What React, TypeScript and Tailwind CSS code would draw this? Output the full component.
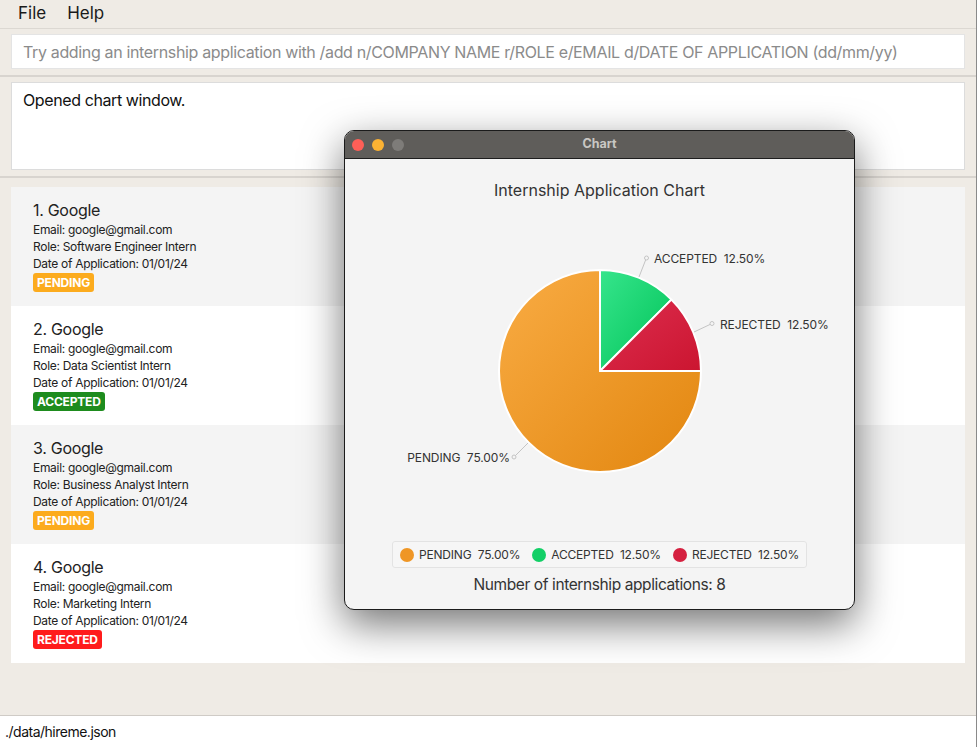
import React from "react";

const font = { fontFamily: "Inter, 'Noto Sans', sans-serif" };

type Status = "PENDING" | "ACCEPTED" | "REJECTED";
const apps: { n: number; role: string; status: Status }[] = [
  { n: 1, role: "Software Engineer Intern", status: "PENDING" },
  { n: 2, role: "Data Scientist Intern", status: "ACCEPTED" },
  { n: 3, role: "Business Analyst Intern", status: "PENDING" },
  { n: 4, role: "Marketing Intern", status: "REJECTED" },
];

function Badge({ s }: { s: Status }) {
  const cls =
    s === "PENDING"
      ? "bg-[#fcab1d]"
      : s === "ACCEPTED"
      ? "bg-[#1e8c1e]"
      : "bg-[#ff1c1c]";
  return (
    <span
      className={`${cls} flex items-center h-[19px] px-[4px] rounded-[3px] text-white text-[12px] font-bold leading-none tracking-[-0.2px]`}
    >
      {s}
    </span>
  );
}

function Card({ a, i }: { a: (typeof apps)[number]; i: number }) {
  return (
    <div
      className={`${i % 2 === 0 ? "bg-[#f4f4f4]" : "bg-white"} h-[119px] pl-[22px] pt-[13px] flex flex-col items-start text-[#222]`}
    >
      <div className="text-[16px] leading-[20px] tracking-[-0.3px]">{a.n}. Google</div>
      <div className="text-[12px] leading-[17px] tracking-[-0.3px] mt-[1px]">Email: google@gmail.com</div>
      <div className="text-[12px] leading-[17px] tracking-[-0.3px]">Role: {a.role}</div>
      <div className="text-[12px] leading-[17px] tracking-[-0.3px]">Date of Application: 01/01/24</div>
      <div className="mt-[1px] flex">
        <Badge s={a.status} />
      </div>
    </div>
  );
}

function Pie() {
  return (
    <svg width="508" height="330" viewBox="0 0 508 330" className="block">
      <defs>
        <linearGradient id="gp" x1="0" y1="0" x2="1" y2="1">
          <stop offset="0" stopColor="#f9ac44" />
          <stop offset="1" stopColor="#e2860f" />
        </linearGradient>
        <linearGradient id="ga" x1="0" y1="0" x2="1" y2="1">
          <stop offset="0" stopColor="#36e58c" />
          <stop offset="1" stopColor="#00c257" />
        </linearGradient>
        <linearGradient id="gr" x1="0" y1="0" x2="1" y2="1">
          <stop offset="0" stopColor="#dd2e4f" />
          <stop offset="1" stopColor="#cb1530" />
        </linearGradient>
      </defs>
      <g stroke="#ffffff" strokeWidth="2" strokeLinejoin="round">
        <path d="M254,170 L254,69 A101,101 0 1 0 355,170 Z" fill="url(#gp)" />
        <path d="M254,170 L254,69 A101,101 0 0 1 325.4,98.6 Z" fill="url(#ga)" />
        <path d="M254,170 L325.4,98.6 A101,101 0 0 1 355,170 Z" fill="url(#gr)" />
      </g>
      <g stroke="#c4c4c4" strokeWidth="1" fill="#f4f4f4">
        <line x1="293" y1="76" x2="300" y2="58" />
        <circle cx="300.5" cy="57" r="2" />
        <line x1="348" y1="131" x2="365" y2="123" />
        <circle cx="366" cy="122.5" r="2" />
        <line x1="182" y1="242" x2="169" y2="255" />
        <circle cx="168" cy="256" r="2" />
      </g>
      <g fill="#333" fontSize="12" letterSpacing="-0.1" style={font}>
        <text x="308" y="61.5">ACCEPTED&#160;&#160;12.50%</text>
        <text x="374" y="127.5">REJECTED&#160;&#160;12.50%</text>
        <text x="164" y="260.5" textAnchor="end">PENDING&#160;&#160;75.00%</text>
      </g>
    </svg>
  );
}

function LegendItem({ color, label }: { color: string; label: string }) {
  return (
    <div className="flex items-center gap-[5px]">
      <span className={`${color} w-[14px] h-[14px] rounded-full`} />
      <span className="text-[12px] tracking-[-0.2px] text-[#333] whitespace-pre">{label}</span>
    </div>
  );
}

function ChartWindow() {
  return (
    <div className="absolute left-[344px] top-[130px] w-[511px] h-[480px] rounded-[10px] border border-[#1b1b1b] bg-[#f4f4f4] shadow-[0_14px_40px_rgba(0,0,0,0.55)] overflow-hidden flex flex-col">
      <div className="h-[28px] bg-[#5f5d5a] border-b border-[#1e1e1e] relative flex items-center shrink-0">
        <div className="flex gap-[8px] pl-[7px]">
          <span className="w-[12px] h-[12px] rounded-full bg-[#fe5f57]" />
          <span className="w-[12px] h-[12px] rounded-full bg-[#fbb233]" />
          <span className="w-[12px] h-[12px] rounded-full bg-[#7e7c79]" />
        </div>
        <div className="absolute inset-0 flex items-center justify-center text-[12.5px] font-bold text-[#c9c7c4]">
          Chart
        </div>
      </div>
      <div className="flex flex-col items-center pt-[20px]">
        <div className="text-[16px] leading-[22px] text-[#333]">Internship Application Chart</div>
        <Pie />
        <div className="mt-[10px] h-[27px] px-[7px] flex items-center gap-[12px] rounded-[3px] border border-[#e3e3e3] bg-[#f6f6f6]">
          <LegendItem color="bg-[#ef9625]" label="PENDING  75.00%" />
          <LegendItem color="bg-[#12cf66]" label="ACCEPTED  12.50%" />
          <LegendItem color="bg-[#d5203f]" label="REJECTED  12.50%" />
        </div>
        <div className="mt-[7px] text-[15.5px] leading-[20px] tracking-[-0.4px] text-[#333]">
          Number of internship applications: 8
        </div>
      </div>
    </div>
  );
}

export default function App() {
  return (
    <div style={font} className="relative w-[979px] h-[747px] bg-white overflow-hidden">
      <div className="w-[977px] h-[747px] bg-[#efebe5] border-r border-[#8a8a8a] flex flex-col">
        <div className="h-[29px] flex items-center gap-[21px] pl-[18px] text-[17px] text-[#1a1a1a] border-b border-[#dcd8d2] shrink-0">
          <span>File</span>
          <span>Help</span>
        </div>
        <div className="px-[11px] pt-[5px] pb-[6px] border-b-2 border-[#d8d4cf]">
          <div className="h-[35px] bg-white border border-[#e4e4e4] flex items-center pl-[11px] text-[16px] text-[#8b8b8b] whitespace-nowrap overflow-hidden tracking-[-0.35px]">
            Try adding an internship application with /add n/COMPANY NAME r/ROLE e/EMAIL d/DATE OF APPLICATION (dd/mm/yy)
          </div>
        </div>
        <div className="px-[11px] pt-[5px] pb-[6px] border-b-2 border-[#d8d4cf]">
          <div className="h-[88px] bg-white border border-[#dcdcdc] pl-[11px] pt-[6px] text-[16px] leading-[22px] tracking-[-0.4px] text-[#111]">
            Opened chart window.
          </div>
        </div>
        <div className="flex-1 px-[11px] pt-[9px]">
          {apps.map((a, i) => (
            <Card key={a.n} a={a} i={i} />
          ))}
        </div>
        <div className="h-[32px] bg-white border-t border-[#cfcbc6] flex items-center pl-[5px] text-[14px] tracking-[-0.5px] text-[#111] shrink-0">
          ./data/hireme.json
        </div>
      </div>
      <ChartWindow />
    </div>
  );
}
